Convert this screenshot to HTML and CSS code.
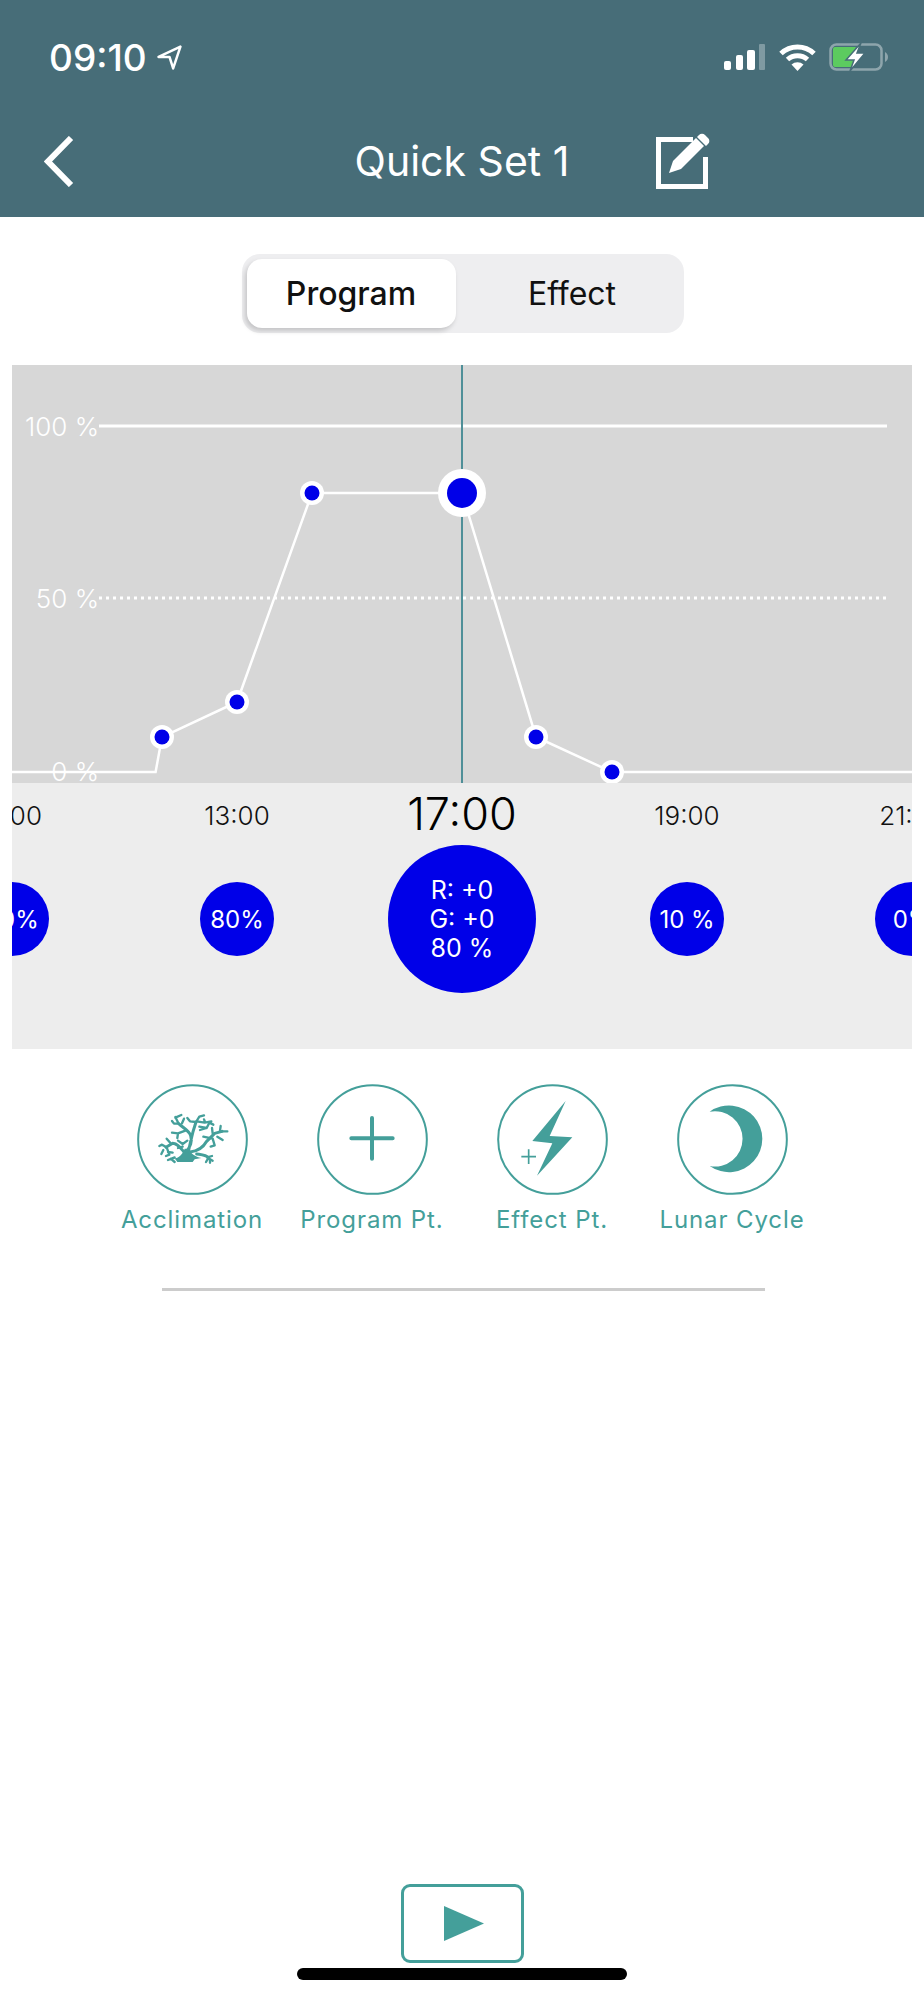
FILE: index.html
```html
<!DOCTYPE html>
<html lang="en">
<head>
    <meta charset="UTF-8">
    <meta name="viewport" content="width=device-width, initial-scale=1.0">
    <title>Quick Set 1</title>
    <link rel="stylesheet" href="styles.css">
</head>
<body>
    <header class="header">
        <div class="status-bar">
            <div class="status-time">
                <span>09:10</span>
                <svg class="status-arrow" viewBox="0 0 24 24"><path d="M22.500 1.500 1.500 11.500h10.500l3.500 11z" fill="none" stroke="#fff" stroke-width="2.400" stroke-linejoin="round"/></svg>
            </div>
            <div class="status-icons">
                <svg class="status-signal" viewBox="0 0 41 26">
                    <rect x="0" y="17" width="7" height="9" rx="2" fill="#fff"/>
                    <rect x="12" y="11" width="7" height="15" rx="2" fill="#fff"/>
                    <rect x="23" y="6" width="8" height="20" rx="2" fill="#fff"/>
                    <rect x="35" y="0" width="6" height="26" rx="1" fill="#7f9aa2"/>
                </svg>
                <svg class="status-wifi" viewBox="0 0 37 27">
                    <path d="M2 9.500a24 24 0 0 1 33 0" fill="none" stroke="#fff" stroke-width="5"/>
                    <path d="M8.500 15.500a15 15 0 0 1 20 0" fill="none" stroke="#fff" stroke-width="5"/>
                    <path d="M12.500 20.500a9 9 0 0 1 12 0L18.500 27z" fill="#fff"/>
                </svg>
                <svg class="status-battery" viewBox="0 0 60 28">
                    <rect x="1.500" y="1.500" width="51" height="25" rx="6" fill="none" stroke="#8ea5ac" stroke-width="2.500"/>
                    <path d="M56 9c2 1 3 3 3 5s-1 4-3 5z" fill="#8ea5ac"/>
                    <path d="M6 4h21l-7 13h6l-3 7H6a2 2 0 0 1-2-2V6a2 2 0 0 1 2-2z" fill="#5ccb5f"/>
                    <path d="M32 0 17 17h8l-4 11 15-18h-8z" fill="#fff" stroke="#476d78" stroke-width="1.500"/>
                </svg>
            </div>
        </div>
        <div class="nav-bar">
            <svg class="nav-back" viewBox="0 0 30 51"><path d="M27 2 4 25.500 27 49" fill="none" stroke="#fff" stroke-width="6"/></svg>
            <h1 class="nav-title">Quick Set 1</h1>
            <svg class="nav-edit" viewBox="0 0 58 56">
                <path d="M37 6.500H2.500v47h47V24" fill="none" stroke="#fff" stroke-width="5"/>
                <path d="M13 40 17 28 40 5l8 8-23 23z" fill="#fff"/>
                <path d="M43 2a4 4 0 0 1 6 0l3 3a4 4 0 0 1 0 6l-2 2-9-9z" fill="#fff"/>
            </svg>
        </div>
    </header>

    <div class="tabs">
        <div class="tab tab-active">Program</div>
        <div class="tab">Effect</div>
    </div>

    <section class="panel">
        <svg class="chart" viewBox="0 0 900 418">
            <line class="grid-line" x1="87" y1="61" x2="875" y2="61"/>
            <line class="grid-line grid-dotted" x1="87" y1="233" x2="875" y2="233"/>
            <text class="grid-label" x="87" y="71">100 %</text>
            <text class="grid-label" x="87" y="243">50 %</text>
            <text class="grid-label" x="87" y="416">0 %</text>
            <polyline class="curve" points="0,407 143.600,407 150,372 225,337 300,128 450,128 524,372 600,407 900,407"/>
            <line class="cursor" x1="450" y1="0" x2="450" y2="418"/>
            <circle class="dot-ring" cx="150" cy="372" r="12"/>
            <circle class="dot" cx="150" cy="372" r="7.500"/>
            <circle class="dot-ring" cx="225" cy="337" r="12"/>
            <circle class="dot" cx="225" cy="337" r="7.500"/>
            <circle class="dot-ring" cx="300" cy="128" r="12"/>
            <circle class="dot" cx="300" cy="128" r="7.500"/>
            <circle class="dot-ring" cx="450" cy="128" r="24"/>
            <circle class="dot" cx="450" cy="128" r="15"/>
            <circle class="dot-ring" cx="524" cy="372" r="12"/>
            <circle class="dot" cx="524" cy="372" r="7.500"/>
            <circle class="dot-ring" cx="600" cy="407" r="12"/>
            <circle class="dot" cx="600" cy="407" r="7.500"/>
        </svg>

        <div class="timeline">
            <div class="slot">
                <div class="slot-time">11:00</div>
                <div class="bubble">60%</div>
            </div>
            <div class="slot">
                <div class="slot-time">13:00</div>
                <div class="bubble">80%</div>
            </div>
            <div class="slot slot-current">
                <div class="slot-time">17:00</div>
                <div class="bubble">R: +0<br>G: +0<br>80 %</div>
            </div>
            <div class="slot">
                <div class="slot-time">19:00</div>
                <div class="bubble">10 %</div>
            </div>
            <div class="slot">
                <div class="slot-time">21:00</div>
                <div class="bubble">0%</div>
            </div>
        </div>
    </section>

    <div class="actions">
        <div class="action">
            <svg class="action-icon" viewBox="0 0 333 333">
                <circle class="ring" cx="166.500" cy="166.500" r="163"/>
                <g transform="translate(9 -12)" fill="none" stroke="#449f9a" stroke-linecap="round" stroke-linejoin="round">
                    <path d="M100 236c18-2 28-14 34-30l12 0c6 14 20 24 38 28l-20 4-6 8h-46l-6-8z" fill="#449f9a" stroke="none"/>
                    <path stroke-width="9" d="M140 215c10-16 18-30 12-48-4-14-18-20-36-36M146 210c6-22 8-44 22-84M150 216c22-2 40-14 50-32l24-24 22-6M132 216c-12-14-18-24-34-26l-20 12M170 222c14 2 28 2 36 12"/>
                    <path stroke-width="7" d="M116 131l-10-20M116 131l-14 0-6-8M106 113l18-8M126 130l6-14M136 152l-22 8-18-2M114 160l-2 14M168 126l-18-2-8-10M168 126l10-16M178 110l14-4M170 124l24 4 20-4M196 128l-4-10M180 150l20-6 8-16M208 128l12 6M200 144l-22-4M190 170l28 6 6 20M224 196l-12 4M218 160l-2-16M240 152l2-14M246 154l16 0M232 170l16 10M92 190l-12-14M80 202l-14-8-8 4M80 202l8 22-10 4M84 216l14 2M70 210l-6 12M202 232l14-4M204 234l14 8M204 236l-6 10M210 238l0 10M104 232l-20 8M92 236l12 10M128 192l14-10M128 192l-14-10M128 200l-14 4"/>
                </g>
            </svg>
            <div class="action-label">Acclimation</div>
        </div>
        <div class="action">
            <svg class="action-icon" viewBox="0 0 333 333">
                <circle class="ring" cx="166.500" cy="166.500" r="163"/>
                <path d="M165 102v122M103 163h124" fill="none" stroke="#449f9a" stroke-width="12" stroke-linecap="round"/>
            </svg>
            <div class="action-label">Program Pt.</div>
        </div>
        <div class="action">
            <svg class="action-icon" viewBox="0 0 333 333">
                <circle class="ring" cx="166.500" cy="166.500" r="163"/>
                <path d="M206 51 106 171l60 7-46 97 106-115-68-4z" fill="#449f9a"/>
                <path d="M95 196v44M73 218h44" fill="none" stroke="#449f9a" stroke-width="5"/>
            </svg>
            <div class="action-label">Effect Pt.</div>
        </div>
        <div class="action">
            <svg class="action-icon" viewBox="0 0 333 333">
                <circle class="ring" cx="166.500" cy="166.500" r="163"/>
                <path d="M98 83A100 100 0 1 1 98 246 83 83 0 1 0 98 83z" fill="#449f9a"/>
            </svg>
            <div class="action-label">Lunar Cycle</div>
        </div>
    </div>

    <div class="divider"></div>

    <div class="footer">
        <button class="play-btn">
            <svg class="play-icon" viewBox="0 0 40 35"><path d="M0 0 40 17.500 0 35z" fill="#449f9a"/></svg>
        </button>
        <div class="home-bar"></div>
    </div>
</body>
</html>
```

FILE: styles.css
```css
* {
    margin: 0;
    padding: 0;
    box-sizing: border-box;
}

body {
    font-family: Inter, 'Liberation Sans', sans-serif;
    background: white;
    height: 2000px;
    display: flex;
    flex-direction: column;
    overflow: hidden;
}

.header {
    background: #476d78;
    height: 217px;
    color: white;
    flex-shrink: 0;
}

.status-bar {
    display: flex;
    align-items: center;
    justify-content: space-between;
    height: 28px;
    margin-top: 43px;
    padding: 0 35px 0 49px;
}

.status-time {
    display: flex;
    align-items: center;
    gap: 10px;
    font-size: 37px;
    font-weight: 500;
}

.status-arrow {
    width: 25px;
    height: 25px;
}

.status-icons {
    display: flex;
    align-items: center;
}

.status-signal {
    width: 41px;
    height: 26px;
    margin-right: 14px;
}

.status-wifi {
    width: 37px;
    height: 27px;
    margin-right: 13px;
}

.status-battery {
    width: 60px;
    height: 28px;
}

.nav-bar {
    display: grid;
    grid-template-columns: 1fr auto 1fr;
    align-items: center;
    margin-top: 62px;
    height: 56px;
}

.nav-back {
    width: 30px;
    height: 51px;
    margin-left: 44px;
}

.nav-title {
    font-size: 41px;
    font-weight: 400;
}

.nav-edit {
    width: 58px;
    height: 56px;
    margin-left: 87px;
}

.tabs {
    align-self: center;
    display: flex;
    width: 442px;
    height: 79px;
    margin: 37px 0 32px 1px;
    padding: 5px;
    background: #eeeef0;
    border-radius: 18px;
    flex-shrink: 0;
}

.tab {
    flex: 1;
    display: flex;
    align-items: center;
    justify-content: center;
    padding-left: 10px;
    font-size: 32px;
    color: #111;
}

.tab-active {
    flex: none;
    width: 209px;
    padding-left: 0;
    background: white;
    border-radius: 15px;
    font-weight: 500;
    box-shadow: -2px 3px 5px rgba(0, 0, 0, 0.18);
}

.panel {
    margin: 0 12px;
    flex-shrink: 0;
}

.chart {
    display: block;
    width: 900px;
    height: 418px;
    background: #d7d7d7;
    overflow: visible;
}

.grid-line {
    stroke: white;
    stroke-width: 3;
}

.grid-dotted {
    stroke-dasharray: 3 4;
}

.grid-label {
    font-size: 26px;
    font-weight: 300;
    fill: white;
    text-anchor: end;
}

.curve {
    fill: none;
    stroke: white;
    stroke-width: 2.500;
}

.cursor {
    stroke: #4f8f98;
    stroke-width: 2;
}

.dot-ring {
    fill: white;
}

.dot {
    fill: #0000e8;
}

.timeline {
    position: relative;
    display: flex;
    justify-content: center;
    height: 266px;
    background: #ededed;
    overflow: hidden;
}

.slot {
    flex: none;
    width: 225px;
    display: flex;
    flex-direction: column;
    align-items: center;
}

.slot-time {
    font-size: 26px;
    height: 60px;
    margin-top: 17px;
    color: #111;
    font-weight: 300;
}

.slot-current .slot-time {
    font-size: 45px;
    margin-top: 3px;
    height: 59px;
    color: #000;
}

.bubble {
    display: flex;
    align-items: center;
    justify-content: center;
    text-align: center;
    width: 74px;
    height: 74px;
    margin-top: 22px;
    border-radius: 50%;
    background: #0000e8;
    color: white;
    font-size: 24px;
    font-weight: 400;
    line-height: 29px;
}

.slot-current .bubble {
    width: 148px;
    height: 148px;
    margin-top: 0;
    font-size: 25px;
}

.actions {
    display: flex;
    justify-content: center;
    gap: 0;
    margin-top: 35px;
    flex-shrink: 0;
}

.action {
    width: 180px;
    display: flex;
    flex-direction: column;
    align-items: center;
}

.action-icon {
    width: 111px;
    height: 111px;
}

.ring {
    fill: none;
    stroke: #449f9a;
    stroke-width: 6;
}

.action-label {
    margin-top: 10px;
    font-size: 24px;
    letter-spacing: 0.9px;
    color: #449f9a;
    white-space: nowrap;
}

.divider {
    align-self: center;
    width: 603px;
    height: 3px;
    margin: 54px 0 0 3px;
    background: #cccccc;
    flex-shrink: 0;
}

.footer {
    margin-top: auto;
    display: flex;
    flex-direction: column;
    align-items: center;
    padding-bottom: 20px;
}

.play-btn {
    display: flex;
    align-items: center;
    justify-content: center;
    width: 123px;
    height: 79px;
    background: white;
    border: 3px solid #449f9a;
    border-radius: 9px;
}

.play-icon {
    width: 40px;
    height: 35px;
    margin-left: 4px;
}

.home-bar {
    width: 330px;
    height: 12px;
    margin-top: 5px;
    background: black;
    border-radius: 6px;
}
```
